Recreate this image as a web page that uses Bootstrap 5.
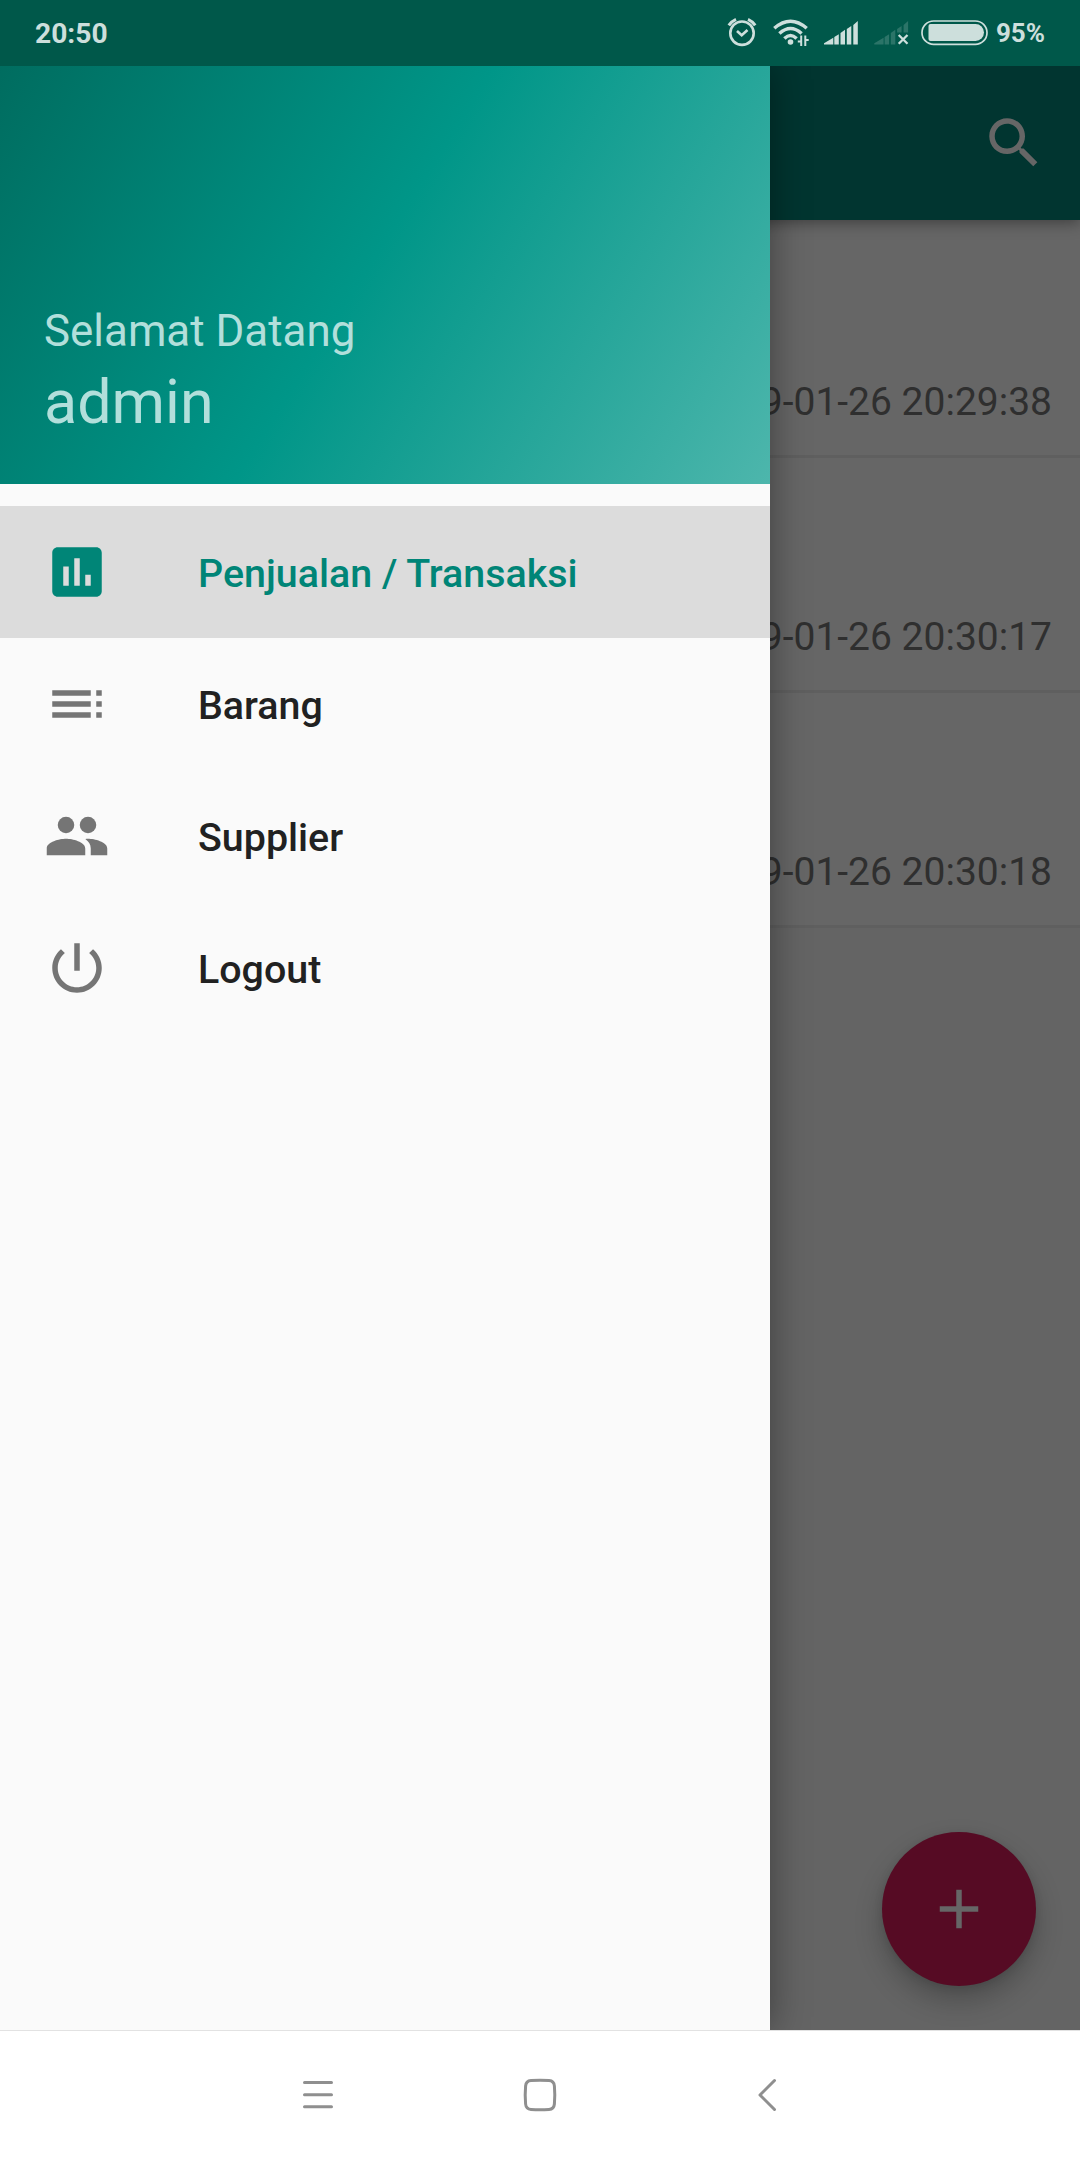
<!DOCTYPE html>
<html lang="id">
<head>
<meta charset="utf-8">
<meta name="viewport" content="width=device-width, initial-scale=1">
<title>Penjualan</title>
<link href="https://cdn.jsdelivr.net/npm/bootstrap@5.3.0/dist/css/bootstrap.min.css" rel="stylesheet">
<style>
  body { font-family: Roboto, "Noto Sans", sans-serif; background: #646464; }
  .screen { width: 1080px; height: 2160px; }
  .statusbar { height: 66px; background: #00584a; color: #cddfdc; padding: 0 35px; z-index: 4; }
  .clock { font-size: 28.2px; line-height: 34px; padding-top: 2px; }
  .battery-text { width: 51px; font-size: 26px; line-height: 34px; text-align: right; }
  .stage { background: #646464; }
  .toolbar { height: 154px; background: #013530; padding-right: 33px; z-index: 1; box-shadow: 0 3px 14px rgba(0,0,0,.38); }
  .search-icon { color: #666; }
  .icon24 { width: 66px; height: 66px; display: block; fill: currentColor; flex: none; }
  .list-gap { height: 3px; background: #666; }
  .sale-row { height: 235px; background: #666; border-bottom: 3px solid #5f5f5f; padding: 0 28px 28px 0; color: #2f2f2f; font-size: 39px; line-height: 50px; }
  .drawer { width: 770px; background: #fafafa; z-index: 2; box-shadow: 0 0 36px rgba(0,0,0,.4); }
  .drawer-head { height: 418px; color: #b2dfdb; padding: 0 44px 44px; background: linear-gradient(122.15deg, #00695c 0%, #009688 50%, #4db6ac 100%) left bottom / 770px 484px no-repeat; }
  .greet { font-size: 43.9px; line-height: 56px; margin-bottom: 1px; }
  .who { font-size: 61px; line-height: 76px; margin-top: 4px; }
  .menu { padding-top: 22px; }
  .menu-link { height: 132px; padding: 0 44px; gap: 88px; color: #757575; text-decoration: none; font-size: 39.4px; font-weight: 500; }
  .menu-link span { color: #212121; padding-top: 3px; }
  .menu-link.active, .menu-link.active span { color: #008577; }
  .menu-link.active { background: #dcdcdc; }
  .fab { width: 154px; height: 154px; right: 44px; bottom: 44px; background: #560b24; color: #666; box-shadow: 0 14px 28px rgba(0,0,0,.24), 0 2px 8px rgba(0,0,0,.1); }
  .sysnav { height: 130px; background: #fff; border-top: 1px solid #e2e2e2; padding: 0 286px; z-index: 3; }
</style>
<script src="https://cdn.jsdelivr.net/npm/bootstrap@5.3.0/dist/js/bootstrap.bundle.min.js"></script>
</head>
<body>
<div class="screen d-flex flex-column overflow-hidden">
  <header class="statusbar position-relative d-flex align-items-center justify-content-between">
    <span class="clock fw-bold">20:50</span>
    <div class="d-flex align-items-center">
      <svg width="270" height="66" viewBox="724 0 270 66" fill="none" stroke="#cddfdc">
        <!-- alarm -->
        <circle cx="742" cy="33.200" r="11.700" stroke-width="2.600"/>
        <path d="M737 31l4.700 4.300 5.800-5.300" stroke-width="2.600"/>
        <path d="M728.800 25.300q2.700-4 7.200-6M755.200 25.300q-2.700-4-7.200-6" stroke-width="3"/>
        <!-- wifi -->
        <path d="M774.300 28.200q16.200-14 32.400 0M779.400 33.500q11.100-10 22.200 0M784.400 38.500q6.100-6 12.200 0" stroke-width="3.500"/>
        <circle cx="790.500" cy="42" r="2.800" fill="#cddfdc" stroke="none"/>
        <path d="M801.200 35.500v10.500M805.300 35.500v10.500M797.800 41.500h3.400M805.300 40h3.400" stroke-width="2"/>
        <!-- signal, first SIM -->
        <path fill="#cddfdc" stroke="none" d="M824 44.500v-1.300l9.300-5.400v6.700zM834.300 37l4.500-2.700v10.200h-4.500zM840.500 33l4.500-3.200v14.700h-4.500zM846.800 29l4.500-3v18.500h-4.500zM853.300 25l4.500-4v23.500h-4.500z"/>
        <!-- signal, second SIM -->
        <path fill="#2b7468" stroke="none" d="M874.300 44.500v-1.300l9.300-5.400v6.700zM884.600 37l4.500-2.700v10.200h-4.500zM890.800 33l4.500-3.200v14.700h-4.500zM897.100 29l4.500-3v6.500h-4.500zM903.600 25l4.500-4v11.500h-4.500z"/>
        <path d="M898.700 35l8.800 8.800M907.500 35l-8.800 8.800" stroke-width="2.300"/>
        <!-- battery -->
        <rect x="922" y="21" width="65" height="23.300" rx="11.650" stroke-width="1.700"/>
        <path fill="#cddfdc" stroke="none" d="M930.500 24h45a8.500 8.500 0 0 1 0 17h-45a2 2 0 0 1-2-2v-13a2 2 0 0 1 2-2z"/>
      </svg>
      <span class="battery-text fw-bold">95%</span>
    </div>
  </header>

  <main class="stage position-relative flex-grow-1">
    <div class="toolbar position-relative d-flex align-items-center justify-content-end">
      <svg class="icon24 search-icon" viewBox="0 0 24 24"><path d="M15.500 14h-.79l-.28-.27C15.410 12.590 16 11.110 16 9.500 16 5.910 13.090 3 9.500 3S3 5.910 3 9.500 5.910 16 9.500 16c1.610 0 3.090-.59 4.230-1.570l.27.28v.79l5 4.990L20.490 19l-4.990-5zm-6 0C7.010 14 5 11.990 5 9.500S7.010 5 9.500 5 14 7.010 14 9.500 11.990 14 9.500 14z"/></svg>
    </div>
    <div class="list-gap"></div>
    <div class="d-flex flex-column">
      <div class="sale-row d-flex align-items-end justify-content-end">2019-01-26 20:29:38</div>
      <div class="sale-row d-flex align-items-end justify-content-end">2019-01-26 20:30:17</div>
      <div class="sale-row d-flex align-items-end justify-content-end">2019-01-26 20:30:18</div>
    </div>
    <button class="fab btn rounded-circle border-0 p-0 position-absolute d-flex align-items-center justify-content-center" type="button" aria-label="Tambah">
      <svg class="icon24" viewBox="0 0 24 24"><path d="M19 13h-6v6h-2v-6H5v-2h6V5h2v6h6v2z"/></svg>
    </button>

    <aside class="drawer position-absolute top-0 start-0 h-100 d-flex flex-column">
      <div class="drawer-head d-flex flex-column justify-content-end">
        <div class="greet">Selamat Datang</div>
        <div class="who">admin</div>
      </div>
      <nav class="menu d-flex flex-column">
        <a class="menu-link active d-flex align-items-center" href="#"><svg class="icon24" viewBox="0 0 24 24"><path d="M19 3H5c-1.100 0-2 .9-2 2v14c0 1.100.9 2 2 2h14c1.100 0 2-.9 2-2V5c0-1.100-.9-2-2-2zM9 17H7v-7h2v7zm4 0h-2V7h2v10zm4 0h-2v-4h2v4z"/></svg><span>Penjualan / Transaksi</span></a>
        <a class="menu-link d-flex align-items-center" href="#"><svg class="icon24" viewBox="0 0 24 24"><path d="M3 9h14V7H3v2zm0 4h14v-2H3v2zm0 4h14v-2H3v2zm16 0h2v-2h-2v2zm0-10v2h2V7h-2zm0 6h2v-2h-2v2z"/></svg><span>Barang</span></a>
        <a class="menu-link d-flex align-items-center" href="#"><svg class="icon24" viewBox="0 0 24 24"><circle cx="16" cy="8" r="3"/><circle cx="8" cy="8" r="3"/><path d="M8 13c-2.330 0-7 1.170-7 3.500V19h14v-2.500c0-2.330-4.670-3.500-7-3.500zm8 0c-.29 0-.62.02-.97.05 1.160.84 1.970 1.970 1.970 3.450V19h6v-2.500c0-2.330-4.670-3.500-7-3.500z"/></svg><span>Supplier</span></a>
        <a class="menu-link d-flex align-items-center" href="#"><svg class="icon24" viewBox="0 0 24 24"><path d="M13 3h-2v10h2V3zm4.830 2.170l-1.420 1.420C17.990 7.860 19 9.810 19 12c0 3.870-3.130 7-7 7s-7-3.130-7-7c0-2.190 1.010-4.140 2.580-5.420L6.170 5.170C4.230 6.820 3 9.260 3 12c0 4.970 4.030 9 9 9s9-4.030 9-9c0-2.740-1.230-5.180-3.170-6.830z"/></svg><span>Logout</span></a>
      </nav>
    </aside>
  </main>

  <footer class="sysnav position-relative d-flex align-items-center justify-content-between">
    <svg width="64" height="64" viewBox="286 2064 64 64" fill="none" stroke="#8f8f8f" stroke-width="3" stroke-linecap="round"><path d="M304.500 2082.500h27M304.500 2094.700h27M304.500 2106.700h27"/></svg>
    <svg width="64" height="64" viewBox="508 2064 64 64" fill="none" stroke="#8f8f8f" stroke-width="3"><path d="M531 2080.600q9-.8 18 0q5 .4 5.400 5.400q.8 9 0 18q-.4 5-5.400 5.400q-9 .8-18 0q-5-.4-5.400-5.400q-.8-9 0-18q.4-5 5.400-5.400z"/></svg>
    <svg width="64" height="64" viewBox="730 2064 64 64" fill="none" stroke="#8f8f8f" stroke-width="3" stroke-linecap="round" stroke-linejoin="round"><path d="M774.500 2080.500l-14.500 14.500 14.500 14.500"/></svg>
  </footer>
</div>
</body>
</html>
